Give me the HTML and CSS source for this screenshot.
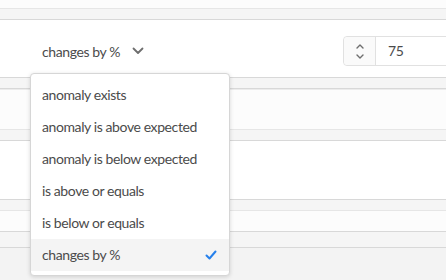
FILE: index.html
```html
<!DOCTYPE html>
<html lang="en">
  <head>
    <meta charset="UTF-8" />
    <title>Alert condition</title>
    <link rel="stylesheet" href="styles.css">
  </head>
  <body>
    <div class="page">
      <div class="strip top"></div>
      <div class="band"></div>
      <div class="panel condition">
        <button class="picker">
          <span class="picker-label">changes by %</span>
          <svg class="chevron" viewBox="0 0 12 8" width="12" height="8">
            <path d="M1.5 1.5 6 6l4.5-4.5" fill="none" stroke="currentColor" stroke-width="1.8" stroke-linecap="round" stroke-linejoin="round"/>
          </svg>
        </button>
        <div class="stepper">
          <div class="stepper-buttons">
            <svg viewBox="0 0 10 6" width="10" height="6"><path d="M2 5 5 2l3 3" fill="none" stroke="currentColor" stroke-width="1.4" stroke-linecap="round" stroke-linejoin="round"/></svg>
            <svg viewBox="0 0 10 6" width="10" height="6"><path d="M2 1l3 3 3-3" fill="none" stroke="currentColor" stroke-width="1.4" stroke-linecap="round" stroke-linejoin="round"/></svg>
          </div>
          <div class="stepper-value">75</div>
        </div>
      </div>
      <div class="band"></div>
      <div class="panel light tall"></div>
      <div class="band"></div>
      <div class="panel white"></div>
      <div class="band soft"></div>
      <div class="panel light short"></div>
      <div class="band wide"></div>
      <div class="rest"></div>

      <ul class="menu">
        <li class="menu-item">anomaly exists</li>
        <li class="menu-item">anomaly is above expected</li>
        <li class="menu-item">anomaly is below expected</li>
        <li class="menu-item">is above or equals</li>
        <li class="menu-item">is below or equals</li>
        <li class="menu-item selected">
          changes by %
          <svg class="check" viewBox="0 0 12 10" width="12" height="10">
            <path d="M1.5 5.5 4.5 8.5 10.5 1.5" fill="none" stroke="currentColor" stroke-width="2" stroke-linecap="round" stroke-linejoin="round"/>
          </svg>
        </li>
      </ul>
    </div>
  </body>
</html>
```

FILE: styles.css
```css
body {
  margin: 0;
  font-family: "Lato", "Open Sans", sans-serif;
  background: #f3f3f3;
  overflow: hidden;
}

.page {
  position: relative;
  width: 446px;
  height: 280px;
}

.strip.top {
  height: 8px;
  background: #fcfcfc;
  border-bottom: 1px solid #e6e6e6;
}

.band {
  height: 10px;
  background: #f5f5f5;
  border-bottom: 1px solid #d8d8d8;
}

.band.soft {
  border-bottom-color: #e6e6e6;
}

.band.wide {
  height: 15px;
}

.panel {
  border-bottom: 1px solid #d8d8d8;
}

.panel.condition {
  background: #ffffff;
  height: 30px;
  padding: 16px 0 11px 42px;
  display: flex;
  align-items: center;
  justify-content: space-between;
}

.panel.light {
  background: #fcfcfc;
}

.panel.tall {
  height: 39px;
  border-top: 1px solid #ececec;
  border-bottom-color: #e6e6e6;
}

.panel.short {
  height: 20px;
}

.panel.white {
  background: #ffffff;
  height: 58px;
}

.rest {
  background: #f3f3f3;
}

.picker {
  display: flex;
  align-items: center;
  gap: 12px;
  background: none;
  border: none;
  padding: 0;
  font: inherit;
  font-size: 14px;
  letter-spacing: -0.4px;
  color: #4b4b4b;
  cursor: pointer;
}

.chevron {
  color: #6e6e6e;
  margin-top: -1px;
}

.stepper {
  display: flex;
  width: 120px;
  height: 30px;
  margin-right: -17px;
  border: 1px solid #e1e1e1;
  border-radius: 4px;
  box-sizing: border-box;
  background: #ffffff;
}

.stepper-buttons {
  width: 31px;
  display: flex;
  flex-direction: column;
  align-items: center;
  justify-content: center;
  gap: 5px;
  background: #fafafa;
  border-right: 1px solid #e1e1e1;
  border-radius: 4px 0 0 4px;
  color: #6e6e6e;
}

.stepper-value {
  padding-left: 12px;
  line-height: 27px;
  font-size: 14px;
  letter-spacing: -0.4px;
  color: #4b4b4b;
}

.menu {
  position: absolute;
  left: 30px;
  top: 73px;
  width: 200px;
  margin: 0;
  padding: 5px 0 4px;
  list-style: none;
  background: #ffffff;
  border: 1px solid #d6d6d6;
  border-radius: 4px;
  box-sizing: border-box;
  box-shadow: 0 1px 4px rgba(0, 0, 0, 0.15);
}

.menu-item {
  height: 32px;
  box-sizing: border-box;
  padding: 0 12px 2px 11px;
  display: flex;
  align-items: center;
  justify-content: space-between;
  font-size: 14px;
  letter-spacing: -0.4px;
  color: #4b4b4b;
}

.menu-item.selected {
  background: #f4f4f4;
}

.check {
  color: #2680eb;
  margin-top: 2px;
}
```
